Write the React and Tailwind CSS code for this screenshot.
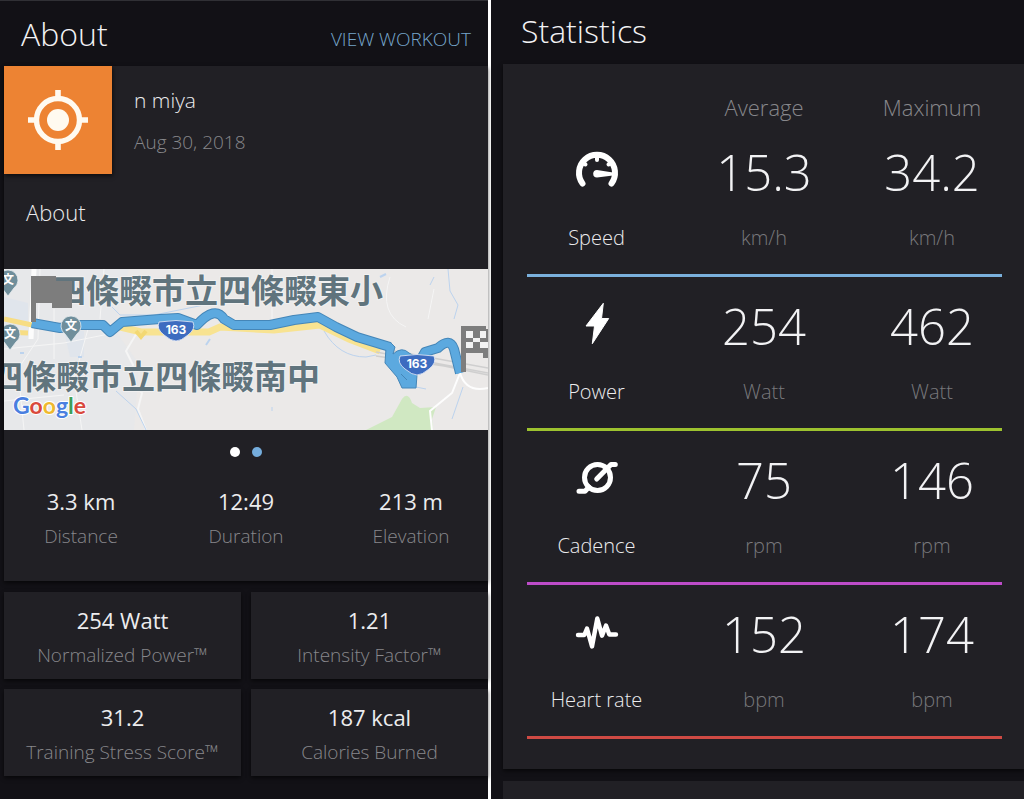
import React from 'react';

const ROUTE = "M28 54 L56 59 L76 56 L99 56 L106 63 L118 53 L156 50 L174 49 L193 56 Q211 36 220 50 L230 56 L266 56 L290 51 L314 48 L332 58 L353 68 L386 78";
const ROUTE_LOOP = "M387 74 L391 78 L389 85 Q398 77 405 84 L412 88 L413 106 L412 119 H398 L393 108 L381 94 L382 79 Z";
const ROUTE_END = "M417 90 L421 83 L434 79 Q446 68 450 80 L456 104";

const summary = [
    { value: "3.3 km", label: "Distance" },
    { value: "12:49", label: "Duration" },
    { value: "213 m", label: "Elevation" },
];

const tiles = [
    { value: "254 Watt", label: "Normalized Power™" },
    { value: "1.21", label: "Intensity Factor™" },
    { value: "31.2", label: "Training Stress Score™" },
    { value: "187 kcal", label: "Calories Burned" },
];

const stats = [
    { name: "Speed", unit: "km/h", avg: "15.3", max: "34.2", line: "border-[#7ab0dc]", Icon: SpeedIcon },
    { name: "Power", unit: "Watt", avg: "254", max: "462", line: "border-[#9dc22f]", Icon: PowerIcon },
    { name: "Cadence", unit: "rpm", avg: "75", max: "146", line: "border-[#bd4cc9]", Icon: CadenceIcon },
    { name: "Heart rate", unit: "bpm", avg: "152", max: "174", line: "border-[#cf4a44]", Icon: HeartRateIcon },
];

function SpeedIcon() {
    return (
        <svg viewBox="0 0 44 44" className="w-11 h-11 mx-auto" fill="none" stroke="currentColor" strokeLinecap="round" aria-hidden="true">
            <path d="M7.5 35.5 A18 18 0 1 1 36.5 35.5" strokeWidth="6" />
            <path d="M22 9 V12 M9 15.5 L10.5 16.5 M35 15.5 L33.5 16.5" strokeWidth="4" />
            <path d="M22 21.9 a3.8 3.8 0 1 0 0 7.6 L38 27.4 V24.4 Z" fill="currentColor" stroke="none" />
        </svg>
    );
}

function PowerIcon() {
    return (
        <svg viewBox="0 0 44 44" className="w-11 h-11 mx-auto" fill="currentColor" stroke="currentColor" strokeLinejoin="round" aria-hidden="true">
            <path d="M28.3 1.3 L26.5 16.5 H33.7 L17.3 41.7 L19.5 24 H11 Z" strokeWidth="1" />
        </svg>
    );
}

function CadenceIcon() {
    return (
        <svg viewBox="0 0 44 44" className="w-11 h-11 mx-auto" fill="none" stroke="currentColor" strokeWidth="5" strokeLinecap="round" strokeLinejoin="round" aria-hidden="true">
            <circle cx="22.5" cy="21.5" r="13" />
            <path d="M40.3 8.5 H36 L21.7 23" />
            <path d="M4 35.3 H10 L14 31" />
        </svg>
    );
}

function HeartRateIcon() {
    return (
        <svg viewBox="0 0 44 44" className="w-11 h-11 mx-auto" fill="none" stroke="currentColor" strokeWidth="4.4" strokeLinecap="round" strokeLinejoin="round" aria-hidden="true">
            <path d="M3 25 H9.3 L12 18.5 L17 36.5 L22.3 8.5 L27 25.7 L31 15.5 L34.3 24.5 H41" />
        </svg>
    );
}

function TargetIcon() {
    return (
        <svg viewBox="0 0 60 60" className="w-[60px] h-[60px]" fill="none" stroke="#fffaf0" aria-hidden="true">
            <circle cx="30" cy="30" r="21.5" strokeWidth="5.4" />
            <circle cx="30" cy="30" r="11" fill="#fffaf0" stroke="none" />
            <path d="M30 0 V8 M30 52 V60 M0 30 H8 M52 30 H60" strokeWidth="5.6" />
        </svg>
    );
}

function SchoolPin({ x, y }) {
    return (
        <g transform={`translate(${x} ${y})`}>
            <path d="M0 17 L-6 9 A10 10 0 1 1 6 9 Z" fill="#6f8e9b" stroke="#e9eef0" strokeWidth="0.8" />
            <text y="5" textAnchor="middle" fontSize="12" fontWeight="700" fill="#fff">文</text>
        </g>
    );
}

function RouteShield({ x, y }) {
    return (
        <g transform={`translate(${x} ${y})`}>
            <path d="M-17 -8 Q0 -11 17 -8 Q20 -1 12 5 Q5 11 0 11 Q-5 11 -12 5 Q-20 -1 -17 -8 Z" fill="#3d6cc0" stroke="#e8eef8" strokeWidth="0.8" />
            <text y="4" textAnchor="middle" fontSize="12" fontWeight="700" fill="#fff" className="font-['Inter',sans-serif]">163</text>
        </g>
    );
}

function RouteMap() {
    return (
        <svg
            viewBox="0 0 484 161"
            preserveAspectRatio="xMidYMid slice"
            className="block w-full h-[161px] bg-[#ebe9e8] font-['Noto_Sans_CJK_JP',sans-serif]"
            role="img"
            aria-label="Route map"
        >
            {/* terrain and minor roads */}
            <path d="M0 0 H125 L110 60 L135 95 L130 161 H0 Z" fill="#e7e8ea" />
            <path d="M0 28 L24 34 V52 H0 Z M60 62 H80 V88 H66 Z" fill="#e0e5ec" />
            <path d="M362 161 L388 148 L398 130 Q404 122 408 134 L416 139 L432 138 L428 150 L429 161 Z" fill="#d0e8c2" />
            <g fill="none" stroke="#f5f5f5" strokeWidth="1.5">
                <path d="M0 80 L60 74 L110 64 M20 161 L14 100 L34 70 L36 0 M50 90 V40 M78 161 L70 110 L84 60 M0 132 L60 126 M100 0 L96 50" strokeWidth="1" />
                <path d="M134 62 L122 82 L129 96 L126 110 L138 124 L134 140 L142 161" strokeWidth="2" />
                <path d="M268 0 V52 M386 8 Q374 45 402 58 M430 20 L424 50" strokeWidth="1" />
                <path d="M456 104 L448 124 L426 142 L428 161 M456 104 Q462 124 484 119" stroke="#fdfdfd" strokeWidth="2" />
            </g>
            <path d="M30 0 L27 70" fill="none" stroke="#fcfcfc" strokeWidth="5" />
            <g fill="none" stroke="#bcd3ee" strokeWidth="1">
                <path d="M104 34 L116 46 H150 L200 36 M112 122 L132 140 L142 161 M320 62 Q335 88 362 88 L372 86" />
                <path d="M444 0 L446 22 L454 36 L450 50 M430 8 L426 16 M459 118 L448 150 M268 138 V142 M402 116 L422 120" />
                <path d="M16 84 H20 M74 88 H78 M202 76 L206 70 M376 8 L382 5" strokeWidth="2" />
            </g>

            {/* trunk road under the route */}
            <path d="M0 50 L28 56 M0 63 L24 64" fill="none" stroke="#f7dd84" strokeWidth="5" />
            <path d="M112 57 L137 63 L156 63 L205 63 L216 58 L270 61 L316 56 L345 70 L376 82" fill="none" stroke="#f8e391" strokeWidth="7" />
            <path d="M132 62 L137 68 L142 62" fill="none" stroke="#f3d873" strokeWidth="4" />
            <path d="M372 83 L484 104 M374 79 L484 99 M372 87 L440 97 L484 106" fill="none" stroke="#cfcfcf" strokeWidth="1.5" />

            <g fill="none" strokeLinejoin="round">
                <path d={ROUTE} stroke="#4486b8" strokeWidth="10" />
                <path d={ROUTE_END} stroke="#4486b8" strokeWidth="10" />
                <path d={ROUTE_LOOP} fill="#5ca9df" stroke="#4486b8" />
                <path d={ROUTE} stroke="#5ca9df" strokeWidth="8" />
                <path d={ROUTE_END} stroke="#5ca9df" strokeWidth="8" />
                <path d="M397 105 L403 111" stroke="#4486b8" />
            </g>

            <SchoolPin x={4} y={10} />
            <SchoolPin x={6} y={64} />
            <SchoolPin x={67} y={56} />
            <RouteShield x={172} y={61} />
            <RouteShield x={413} y={95} />

            <g fontSize="33" fontWeight="700" fill="#60747d" stroke="#f1f1f1" strokeWidth="2" paintOrder="stroke" strokeLinejoin="round">
                <text x="49" y="34">四條畷市立四條畷東小</text>
                <text x="-14" y="120">四條畷市立四條畷南中</text>
            </g>

            {/* start and finish flags */}
            <path d="M27 7 H52 V12 H68 V39 H48 V34 H32 V53 H27 Z" fill="#7d7d7d" />
            <path d="M457 57 H482 V60 H484 V89 H479 V84 H462 V103 H457 Z" fill="#7d7d7d" />
            <path d="M462 62 h7 v7 h-7z M476 62 h6 v7 h-6z M469 69 h7 v4 h-7z M462 73 h7 v6 h-7z M476 73 h8 v6 h-8z" fill="#f3f3f3" />

            <text
                x="9"
                y="145"
                fontSize="23"
                fontWeight="700"
                stroke="#fff"
                strokeWidth="2"
                paintOrder="stroke"
                strokeLinejoin="round"
                className="font-['Lato','Liberation_Sans',sans-serif]"
            >
                <tspan fill="#4a7fe0">G</tspan>
                <tspan fill="#d9493c">o</tspan>
                <tspan fill="#efb92e">o</tspan>
                <tspan fill="#4a7fe0">g</tspan>
                <tspan fill="#3f9f58">l</tspan>
                <tspan fill="#d9493c">e</tspan>
            </text>
        </svg>
    );
}

function Metric({ value, label }) {
    return (
        <div className="flex flex-col items-center gap-[7px] leading-7 whitespace-nowrap">
            <div className="text-[22px] font-normal text-[#ececee]">{value}</div>
            <div className="text-[19px] text-[#87878b]">{label}</div>
        </div>
    );
}

function AboutPanel() {
    return (
        <section className="min-w-0 bg-[#121116] border-t border-[#303035] pl-1">
            <header className="h-[65px] flex items-center justify-between px-[17px]">
                <h1 className="text-[32px] leading-10">About</h1>
                <a href="#workout" className="text-[19px] leading-7 pt-2.5 text-[#76a6cb]">VIEW WORKOUT</a>
            </header>

            <div className="bg-[#212025] shadow-[0_2px_4px_rgba(0,0,0,0.6)]">
                <div className="flex gap-[22px]">
                    <div className="w-[108px] h-[108px] shrink-0 flex items-center justify-center bg-[#ed8333] shadow-[1px_2px_4px_rgba(0,0,0,0.6)]">
                        <TargetIcon />
                    </div>
                    <div className="pt-5 leading-7">
                        <div className="text-[21px] text-[#ececee]">n miya</div>
                        <div className="text-[19px] text-[#87878b] mt-3.5">Aug 30, 2018</div>
                    </div>
                </div>
                <h2 className="text-[22px] leading-7 text-[#ececee] pl-[22px] pt-6 pb-[43px]">About</h2>
                <RouteMap />
                <div className="flex justify-center gap-3 pt-[17px] pb-[30px]">
                    <button type="button" aria-label="Page 1" className="w-2.5 h-2.5 rounded-full bg-white" />
                    <button type="button" aria-label="Page 2" className="w-2.5 h-2.5 rounded-full bg-[#75addd]" />
                </div>
                <div className="grid grid-cols-[154fr_176fr_154fr] pb-[31px]">
                    {summary.map((m) => <Metric key={m.label} {...m} />)}
                </div>
            </div>

            <div className="grid grid-cols-2 gap-2.5 mt-[11px] pb-6">
                {tiles.map((t) => (
                    <div key={t.label} className="bg-[#212025] pt-3.5 pb-2.5 shadow-[0_2px_4px_rgba(0,0,0,0.6)]">
                        <Metric {...t} />
                    </div>
                ))}
            </div>
        </section>
    );
}

function StatisticsPanel() {
    return (
        <section className="min-w-0 bg-[#121116] flex flex-col pl-3">
            <header className="h-16 pt-[11px] pl-[18px]">
                <h1 className="text-[32px] leading-10">Statistics</h1>
            </header>

            <div className="bg-[#212025] pl-6 pr-[22px] pb-[30px] shadow-[0_2px_4px_rgba(0,0,0,0.6)]">
                <table className="w-full table-fixed border-collapse text-center">
                    <colgroup>
                        <col className="w-[139px]" />
                        <col className="w-[196px]" />
                        <col className="w-[140px]" />
                    </colgroup>
                    <thead>
                        <tr className="text-[22px] leading-7 text-[#87878b]">
                            <td className="h-[59px]" />
                            <th scope="col" className="font-light pt-[29px] pb-0.5">Average</th>
                            <th scope="col" className="font-light pt-[29px] pb-0.5">Maximum</th>
                        </tr>
                    </thead>
                    <tbody>
                        {stats.map(({ name, unit, avg, max, line, Icon }) => (
                            <tr key={name} className={`border-b-3 align-top ${line}`}>
                                <th scope="row" className="font-light pt-[25px] pb-[22px] text-white">
                                    <Icon />
                                    <div className="text-[20px] leading-7 mt-8 text-[#ececee]">{name}</div>
                                </th>
                                {[avg, max].map((v, i) => (
                                    <td key={i} className="pt-[18px] pb-[22px]">
                                        <div className="text-[49px] leading-[62px]">{v}</div>
                                        <div className="text-[20px] leading-7 mt-[21px] text-[#78787c]">{unit}</div>
                                    </td>
                                ))}
                            </tr>
                        ))}
                    </tbody>
                </table>
            </div>

            <div className="flex-1 mt-3 bg-[#212025]" />
        </section>
    );
}

function App() {
    return (
        <main className="min-h-screen grid grid-cols-[488fr_3px_533fr] bg-white text-[#f2f2f4] font-light font-['Open_Sans','Noto_Sans',sans-serif]">
            <AboutPanel />
            <div />
            <StatisticsPanel />
        </main>
    );
}

export default App;
